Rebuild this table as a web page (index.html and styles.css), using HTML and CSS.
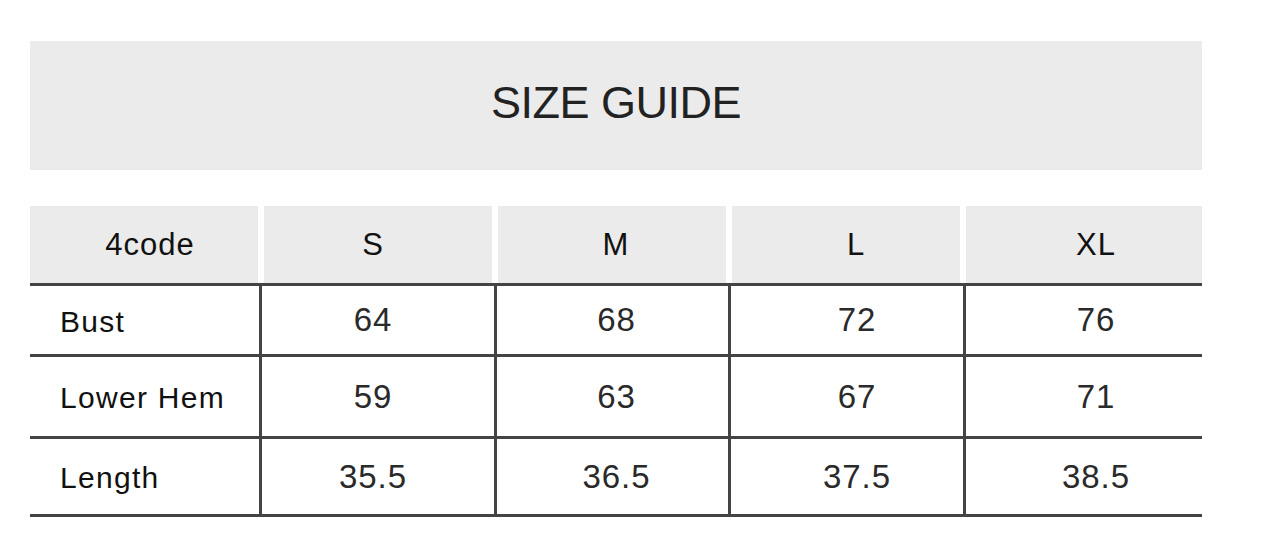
FILE: index.html
```html
<!DOCTYPE html>
<html lang="en">
<head>
<meta charset="utf-8">
<title>Size Guide</title>
<link rel="stylesheet" href="styles.css">
</head>
<body>
<div class="page">
  <div class="title-box">
    <h1 class="title">SIZE GUIDE</h1>
  </div>
  <div class="size-table">
    <div class="head">
      <div class="head-cell c1">4code</div>
      <div class="head-cell c2">S</div>
      <div class="head-cell c3">M</div>
      <div class="head-cell c4">L</div>
      <div class="head-cell c5">XL</div>
    </div>
    <div class="body">
      <div class="row row-bust">
        <div class="label">Bust</div>
        <div class="num c2">64</div>
        <div class="num c3">68</div>
        <div class="num c4">72</div>
        <div class="num c5">76</div>
      </div>
      <div class="row row-hem">
        <div class="label">Lower Hem</div>
        <div class="num c2">59</div>
        <div class="num c3">63</div>
        <div class="num c4">67</div>
        <div class="num c5">71</div>
      </div>
      <div class="row row-length">
        <div class="label">Length</div>
        <div class="num c2">35.5</div>
        <div class="num c3">36.5</div>
        <div class="num c4">37.5</div>
        <div class="num c5">38.5</div>
      </div>
    </div>
  </div>
</div>
</body>
</html>
```
FILE: styles.css
```css
* { box-sizing: border-box; }
html, body { margin: 0; padding: 0; background: #ffffff; }
body { font-family: "Liberation Sans", Arial, sans-serif; }

.page {
  width: 1270px;
  padding: 41px 68px 0 30px;
}

.title-box {
  height: 129px;
  background: #ebebeb;
  display: flex;
  align-items: center;
  justify-content: center;
  padding-bottom: 6px;
}
.title {
  margin: 0;
  font-size: 45px;
  font-weight: normal;
  letter-spacing: -0.5px;
  color: #222222;
  line-height: 1;
}

.size-table { margin-top: 36px; }

.head {
  display: grid;
  grid-template-columns: 228px 228px 228px 228px 1fr;
  column-gap: 6px;
  height: 77px;
}
.head-cell {
  background: #ebebeb;
  display: flex;
  align-items: center;
  justify-content: center;
  font-size: 31px;
  letter-spacing: 1px;
  color: #111111;
}
.head-cell.c1 { padding-left: 12px; }

.body { border-top: 3px solid #444444; }

.row {
  display: grid;
  grid-template-columns: 229px 235px 234px 235px 1fr;
  border-bottom: 3px solid #444444;
}
.row-bust { height: 71px; }
.row-hem { height: 82px; }
.row-length { height: 78px; }

.label {
  display: flex;
  align-items: center;
  padding-left: 30px;
  padding-top: 3px;
  font-size: 30px;
  letter-spacing: 1.3px;
  color: #111111;
}
.num {
  display: flex;
  align-items: center;
  justify-content: center;
  border-left: 3px solid #444444;
  font-size: 33px;
  letter-spacing: 1px;
  color: #2a2a2a;
}

.c2 { padding-right: 10px; }
.c3 { padding-left: 8px; }
.c4 { padding-left: 20px; }
.c5 { padding-left: 24px; }
```
